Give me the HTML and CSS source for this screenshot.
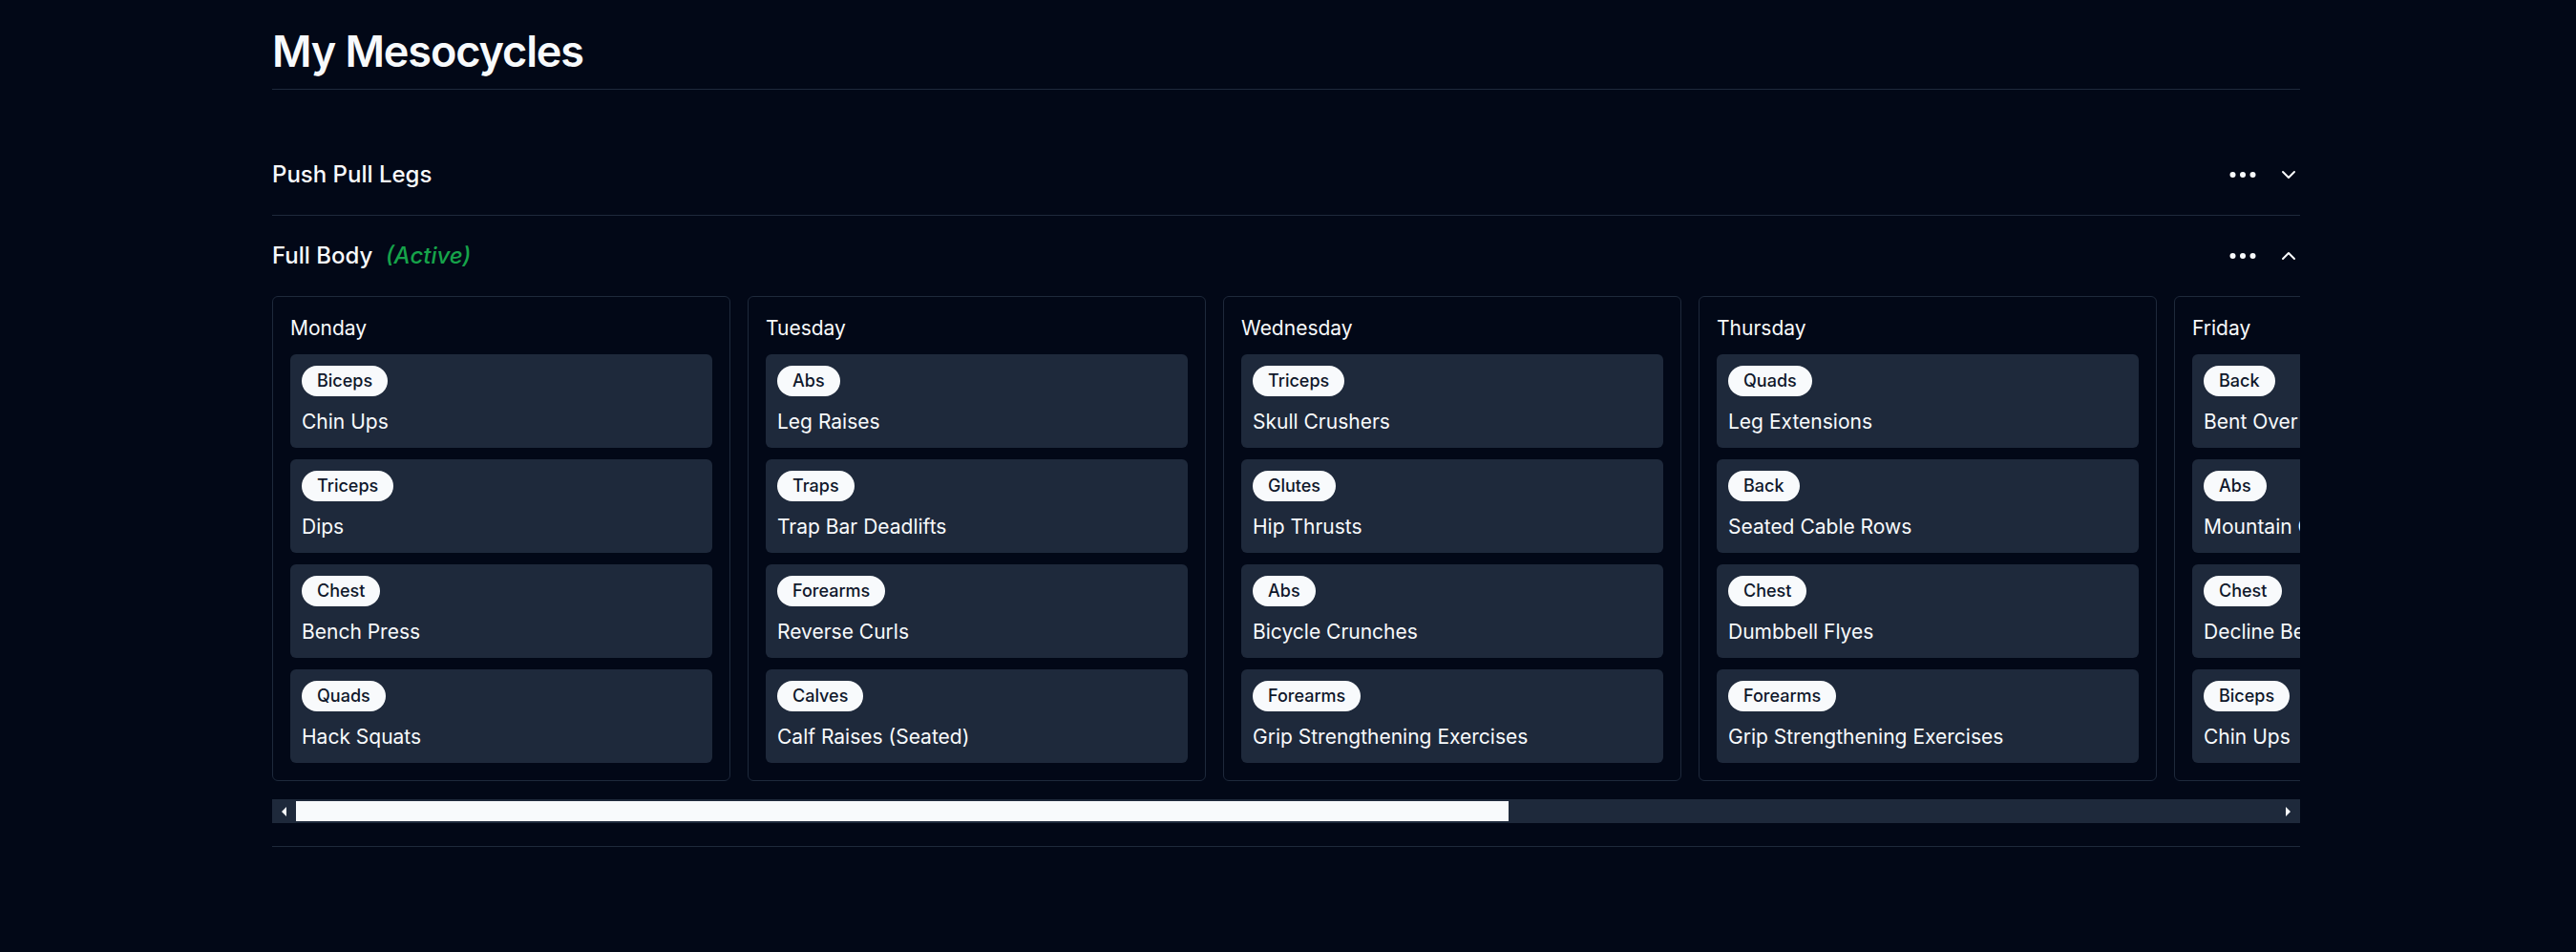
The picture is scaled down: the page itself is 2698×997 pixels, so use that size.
FILE: index.html
```html
<!DOCTYPE html>
<html lang="en">
<head>
<meta charset="utf-8">
<title>My Mesocycles</title>
<link rel="stylesheet" href="styles.css">
</head>
<body>
<main class="page">
  <h1 class="page-title">My Mesocycles</h1>

  <section class="accordion">
    <div class="acc-item">
      <div class="acc-trigger">
        <div class="acc-name">Push Pull Legs</div>
        <div class="acc-actions">
          <svg class="icon-dots" viewBox="0 0 24 24" width="36" height="36"><circle cx="5" cy="12" r="2"/><circle cx="12" cy="12" r="2"/><circle cx="19" cy="12" r="2"/></svg>
          <svg class="icon-chev" viewBox="0 0 24 24" width="24" height="24"><path d="m6 9 6 6 6-6"/></svg>
        </div>
      </div>
    </div>

    <div class="acc-item">
      <div class="acc-trigger">
        <div class="acc-name">Full Body <span class="active-tag">(Active)</span></div>
        <div class="acc-actions">
          <svg class="icon-dots" viewBox="0 0 24 24" width="36" height="36"><circle cx="5" cy="12" r="2"/><circle cx="12" cy="12" r="2"/><circle cx="19" cy="12" r="2"/></svg>
          <svg class="icon-chev" viewBox="0 0 24 24" width="24" height="24"><path d="m18 15-6-6-6 6"/></svg>
        </div>
      </div>
      <div class="acc-content">
        <div class="days-scroll">
          <div class="days">
            <div class="day">
              <div class="day-name">Monday</div>
              <div class="exercises">
                <div class="exercise"><span class="badge">Biceps</span><div class="ex-name">Chin Ups</div></div>
                <div class="exercise"><span class="badge">Triceps</span><div class="ex-name">Dips</div></div>
                <div class="exercise"><span class="badge">Chest</span><div class="ex-name">Bench Press</div></div>
                <div class="exercise"><span class="badge">Quads</span><div class="ex-name">Hack Squats</div></div>
              </div>
            </div>
            <div class="day">
              <div class="day-name">Tuesday</div>
              <div class="exercises">
                <div class="exercise"><span class="badge">Abs</span><div class="ex-name">Leg Raises</div></div>
                <div class="exercise"><span class="badge">Traps</span><div class="ex-name">Trap Bar Deadlifts</div></div>
                <div class="exercise"><span class="badge">Forearms</span><div class="ex-name">Reverse Curls</div></div>
                <div class="exercise"><span class="badge">Calves</span><div class="ex-name">Calf Raises (Seated)</div></div>
              </div>
            </div>
            <div class="day">
              <div class="day-name">Wednesday</div>
              <div class="exercises">
                <div class="exercise"><span class="badge">Triceps</span><div class="ex-name">Skull Crushers</div></div>
                <div class="exercise"><span class="badge">Glutes</span><div class="ex-name">Hip Thrusts</div></div>
                <div class="exercise"><span class="badge">Abs</span><div class="ex-name">Bicycle Crunches</div></div>
                <div class="exercise"><span class="badge">Forearms</span><div class="ex-name">Grip Strengthening Exercises</div></div>
              </div>
            </div>
            <div class="day">
              <div class="day-name">Thursday</div>
              <div class="exercises">
                <div class="exercise"><span class="badge">Quads</span><div class="ex-name">Leg Extensions</div></div>
                <div class="exercise"><span class="badge">Back</span><div class="ex-name">Seated Cable Rows</div></div>
                <div class="exercise"><span class="badge">Chest</span><div class="ex-name">Dumbbell Flyes</div></div>
                <div class="exercise"><span class="badge">Forearms</span><div class="ex-name">Grip Strengthening Exercises</div></div>
              </div>
            </div>
            <div class="day">
              <div class="day-name">Friday</div>
              <div class="exercises">
                <div class="exercise"><span class="badge">Back</span><div class="ex-name">Bent Over Rows</div></div>
                <div class="exercise"><span class="badge">Abs</span><div class="ex-name">Mountain Climbers</div></div>
                <div class="exercise"><span class="badge">Chest</span><div class="ex-name">Decline Bench Press</div></div>
                <div class="exercise"><span class="badge">Biceps</span><div class="ex-name">Chin Ups</div></div>
              </div>
            </div>
            <div class="day">
              <div class="day-name">Saturday</div>
              <div class="exercises">
                <div class="exercise"><span class="badge">Hamstrings</span><div class="ex-name">Romanian Deadlifts</div></div>
                <div class="exercise"><span class="badge">Shoulders</span><div class="ex-name">Lateral Raises</div></div>
                <div class="exercise"><span class="badge">Triceps</span><div class="ex-name">Cable Pushdowns</div></div>
                <div class="exercise"><span class="badge">Calves</span><div class="ex-name">Standing Calf Raises</div></div>
              </div>
            </div>
            <div class="day">
              <div class="day-name">Sunday</div>
              <div class="exercises">
                <div class="exercise"><span class="badge">Quads</span><div class="ex-name">Front Squats</div></div>
                <div class="exercise"><span class="badge">Back</span><div class="ex-name">Lat Pulldowns</div></div>
                <div class="exercise"><span class="badge">Chest</span><div class="ex-name">Incline Dumbbell Press</div></div>
                <div class="exercise"><span class="badge">Abs</span><div class="ex-name">Hanging Knee Raises</div></div>
              </div>
            </div>
          </div>
        </div>
        <div class="scrollbar">
          <div class="sb-btn"><span class="arrow-left"></span></div>
          <div class="sb-track"><div class="sb-thumb" style="width: 61.25%"></div></div>
          <div class="sb-btn"><span class="arrow-right"></span></div>
        </div>
      </div>
    </div>
  </section>
</main>
</body>
</html>
```

FILE: styles.css
```css
html, body {
  margin: 0;
  padding: 0;
  background: #020817;
  color: #f8fafc;
  font-family: "Inter", "Noto Sans", sans-serif;
}

.page {
  width: 2124px;
  margin: 0 0 0 285px;
  padding-top: 27px;
}

.page-title {
  margin: 0;
  font-size: 45px;
  line-height: 54px;
  font-weight: 600;
  padding-bottom: 12px;
  border-bottom: 1px solid #1e293b;
  letter-spacing: -1.1px;
}

.accordion {
  margin-top: 47px;
}

.acc-item {
  border-bottom: 1px solid #1e293b;
}

.acc-trigger {
  display: flex;
  align-items: center;
  justify-content: space-between;
  padding: 24px 0;
}

.acc-name {
  font-size: 24px;
  line-height: 36px;
  font-weight: 500;
}

.active-tag {
  margin-left: 7px;
  color: #16a34a;
  font-style: italic;
}

.acc-actions {
  display: flex;
  align-items: center;
  gap: 18px;
}

.icon-dots {
  display: block;
  fill: #f8fafc;
}

.icon-chev {
  display: block;
  fill: none;
  stroke: #f8fafc;
  stroke-width: 2;
  stroke-linecap: round;
  stroke-linejoin: round;
}

.acc-content {
  padding-bottom: 24px;
}

.days-scroll {
  overflow: hidden;
}

.days {
  display: flex;
  gap: 18px;
  width: max-content;
}

.day {
  width: 480px;
  box-sizing: border-box;
  border: 1px solid #1e293b;
  border-radius: 6px;
  padding: 18px;
}

.day-name {
  font-size: 21px;
  line-height: 30px;
  font-weight: 400;
  margin-bottom: 12px;
}

.exercises {
  display: flex;
  flex-direction: column;
  gap: 12px;
}

.exercise {
  background: #1e293b;
  border-radius: 6px;
  padding: 12px;
  display: flex;
  flex-direction: column;
  align-items: flex-start;
  gap: 12px;
}

.badge {
  display: inline-flex;
  align-items: center;
  background: #f8fafc;
  color: #0f172a;
  border: 1px solid transparent;
  border-radius: 999px;
  padding: 3px 15px;
  font-size: 18px;
  line-height: 24px;
  font-weight: 500;
}

.ex-name {
  font-size: 21px;
  line-height: 30px;
  font-weight: 400;
  white-space: nowrap;
}

.scrollbar {
  margin-top: 19px;
  height: 25px;
  display: flex;
  background: #1e293b;
}

.sb-btn {
  width: 25px;
  height: 25px;
  flex: none;
  display: flex;
  align-items: center;
  justify-content: center;
}

.arrow-left {
  width: 0;
  height: 0;
  border-top: 5px solid transparent;
  border-bottom: 5px solid transparent;
  border-right: 5px solid #f8fafc;
}

.arrow-right {
  width: 0;
  height: 0;
  border-top: 5px solid transparent;
  border-bottom: 5px solid transparent;
  border-left: 5px solid #f8fafc;
}

.sb-track {
  flex: 1;
  padding: 2px 0;
  box-sizing: border-box;
}

.sb-thumb {
  height: 100%;
  background: #f8fafc;
}
```
